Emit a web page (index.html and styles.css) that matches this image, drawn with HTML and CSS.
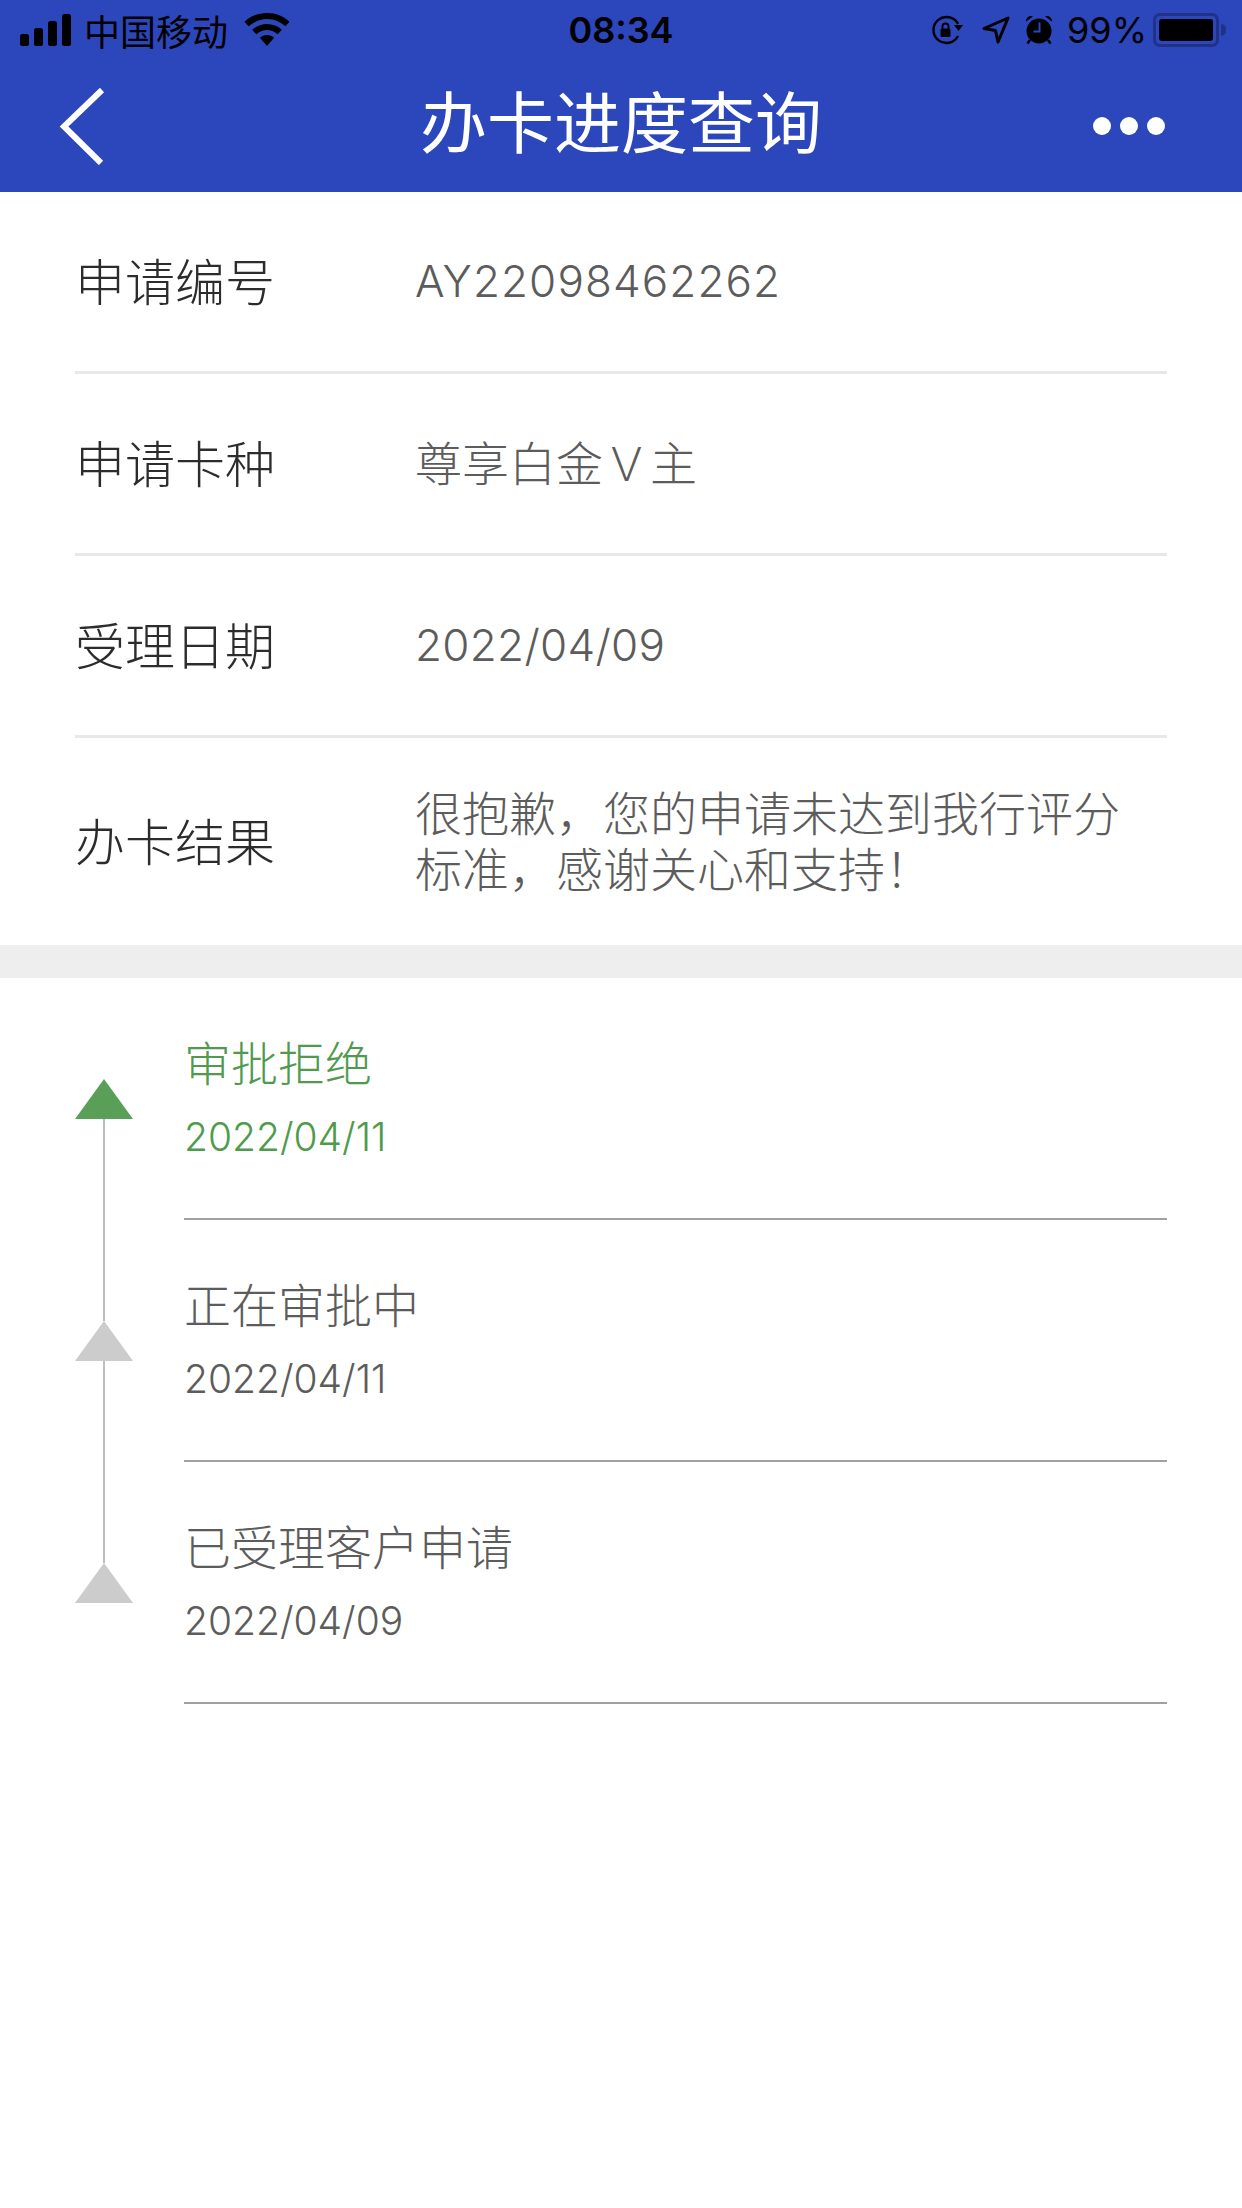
FILE: index.html
```html
<!DOCTYPE html>
<html lang="zh-CN">

<head>
    <meta charset="utf-8">
    <title>办卡进度查询</title>
    <link rel="stylesheet" href="styles.css">
</head>

<body>
    <div class="header">
        <div class="status-bar">
            <div class="status-left">
                <svg class="signal" width="51" height="32" viewBox="0 0 51 32">
                    <rect x="0" y="20" width="9" height="12" rx="2.5" />
                    <rect x="14" y="14" width="9" height="18" rx="2.5" />
                    <rect x="28" y="7" width="9" height="25" rx="2.5" />
                    <rect x="42" y="0" width="9" height="32" rx="2.5" />
                </svg>
                <span class="carrier">中国移动</span>
                <svg class="wifi" width="46" height="34" viewBox="0 0 46 34">
                    <path d="M23 0C14 0 6.500 3.300 0.500 8.700L4.600 13.200C9.600 8.800 16 6 23 6S36.400 8.800 41.400 13.200L45.500 8.700C39.500 3.300 32 0 23 0Z" />
                    <path d="M23 11C17.200 11 12 13.200 8.200 16.800L12.300 21.300C15.200 18.700 18.900 17 23 17S30.800 18.700 33.700 21.300L37.800 16.800C34 13.200 28.800 11 23 11Z" />
                    <path d="M23 22C20.200 22 17.800 23 15.900 24.800L23 33L30.100 24.800C28.200 23 25.800 22 23 22Z" />
                </svg>
            </div>
            <span class="clock">08:34</span>
            <div class="status-right">
                <svg class="lock-icon" width="32" height="30" viewBox="0 0 32 30" fill="none">
                    <path d="M27 9A13 13 0 1 0 27 21" stroke="#000" stroke-width="2.400" />
                    <path d="M23 10H32L27.500 16Z" fill="#000" />
                    <rect x="9.500" y="13.500" width="10" height="8.500" rx="1.500" fill="#000" />
                    <path d="M11.500 14V11.500A3 3 0 0 1 17.500 11.500V14" stroke="#000" stroke-width="1.800" />
                </svg>
                <svg class="location-icon" width="28" height="28" viewBox="0 0 28 28" fill="none">
                    <path d="M26 2L2 12.500L13.500 14.500L16 26Z" stroke="#000" stroke-width="3" stroke-linejoin="round" />
                </svg>
                <svg class="alarm-icon" width="28" height="30" viewBox="0 0 28 30">
                    <circle cx="14" cy="16" r="12.500" />
                    <path d="M1 6.500A5 5 0 0 1 8 1.500ZM27 6.500A5 5 0 0 0 20 1.500Z" />
                    <path d="M5 25L2.500 28.500M23 25L25.500 28.500" stroke="#000" stroke-width="2.500" />
                    <path d="M14.500 7.500V16.500H8.500" stroke="#2c46bb" stroke-width="2" fill="none" />
                </svg>
                <span class="percent">99%</span>
                <div class="battery">
                    <div class="battery-body"><div class="battery-level"></div></div>
                    <div class="battery-cap"></div>
                </div>
            </div>
        </div>
        <div class="nav-bar">
            <svg class="back" width="46" height="78" viewBox="0 0 46 78" fill="none">
                <path d="M43 3L5 39.500L42 76" stroke="#fff" stroke-width="6" />
            </svg>
            <div class="nav-title">办卡进度查询</div>
            <div class="more">
                <span class="dot"></span>
                <span class="dot"></span>
                <span class="dot"></span>
            </div>
        </div>
    </div>

    <div class="info">
        <div class="info-row">
            <div class="info-label">申请编号</div>
            <div class="info-value"><span class="num code">AY22098462262</span></div>
        </div>
        <div class="info-row">
            <div class="info-label">申请卡种</div>
            <div class="info-value">尊享白金Ｖ主</div>
        </div>
        <div class="info-row">
            <div class="info-label">受理日期</div>
            <div class="info-value"><span class="num">2022/04/09</span></div>
        </div>
        <div class="info-row result-row">
            <div class="info-label">办卡结果</div>
            <div class="info-value">很抱歉，您的申请未达到我行评分标准，感谢关心和支持！</div>
        </div>
    </div>

    <div class="gap"></div>

    <div class="timeline">
        <div class="step active">
            <div class="step-mark">
                <div class="triangle"></div>
                <div class="step-line"></div>
            </div>
            <div class="step-body">
                <div class="step-title">审批拒绝</div>
                <div class="step-date">2022/04/11</div>
            </div>
        </div>
        <div class="step">
            <div class="step-mark">
                <div class="triangle"></div>
                <div class="step-line"></div>
            </div>
            <div class="step-body">
                <div class="step-title">正在审批中</div>
                <div class="step-date">2022/04/11</div>
            </div>
        </div>
        <div class="step">
            <div class="step-mark">
                <div class="triangle"></div>
            </div>
            <div class="step-body">
                <div class="step-title">已受理客户申请</div>
                <div class="step-date">2022/04/09</div>
            </div>
        </div>
    </div>
</body>

</html>
```

FILE: styles.css
```css
html,
body {
    margin: 0;
    height: 100%;
}

body {
    font-family: "Noto Sans CJK SC", "Noto Sans", sans-serif;
    font-weight: 300;
    background-color: #ffffff;
    overflow: hidden;
}

.header {
    height: 192px;
    background-color: #2c46bb;
}

.status-bar {
    display: flex;
    justify-content: space-between;
    align-items: center;
    height: 60px;
    padding: 0 16px 0 20px;
    position: relative;
    color: #000000;
}

.status-left,
.status-right {
    display: flex;
    align-items: center;
}

.signal {
    margin-right: 13px;
}

.carrier {
    font-size: 36px;
    font-weight: 400;
    margin-right: 16px;
}

.clock {
    position: absolute;
    left: 0;
    right: 0;
    text-align: center;
    font-family: "Inter", "Liberation Sans", sans-serif;
    font-size: 36px;
    font-weight: 600;
}

.lock-icon {
    margin-right: 19px;
}

.location-icon {
    margin-right: 15px;
}

.alarm-icon {
    margin-right: 14px;
}

.percent {
    font-family: "Inter", "Liberation Sans", sans-serif;
    font-size: 36px;
    font-weight: 400;
    margin-right: 6px;
}

.battery {
    display: flex;
    align-items: center;
}

.battery-body {
    width: 66px;
    height: 34px;
    box-sizing: border-box;
    border: 3px solid #1f3287;
    border-radius: 7px;
    padding: 3px;
}

.battery-level {
    height: 100%;
    background-color: #000000;
    border-radius: 3px;
}

.battery-cap {
    width: 5px;
    height: 12px;
    margin-left: 2px;
    background-color: #1f3287;
    border-radius: 0 6px 6px 0;
}

.nav-bar {
    display: flex;
    align-items: center;
    justify-content: space-between;
    height: 132px;
    padding: 0 77px 0 59px;
    position: relative;
}

.nav-title {
    position: absolute;
    left: 0;
    right: 0;
    top: 0;
    text-align: center;
    font-size: 67px;
    font-weight: 400;
    line-height: 118px;
    color: #ffffff;
}

.more {
    display: flex;
    gap: 9px;
}

.dot {
    width: 18px;
    height: 18px;
    border-radius: 50%;
    background-color: #ffffff;
}

.info {
    padding: 0 75px;
}

.info-row {
    display: flex;
    align-items: center;
    box-sizing: border-box;
    height: 182px;
    padding-bottom: 5px;
    border-bottom: 3px solid #e8e8e8;
}

.result-row {
    height: 207px;
    border-bottom: none;
}

.info-label {
    width: 340px;
    flex-shrink: 0;
    font-size: 50px;
    color: #2c2c2c;
}

.info-value {
    font-size: 47px;
    line-height: 56px;
    padding-right: 12px;
    color: #5c5c5c;
}

.num {
    font-family: "Inter", "Liberation Sans", sans-serif;
    font-size: 44px;
    font-weight: 300;
    letter-spacing: 0.3px;
}

.code {
    letter-spacing: 1.100px;
}

.gap {
    height: 33px;
    background-color: #eeeeee;
}

.timeline {
    padding: 0 75px;
}

.step {
    display: flex;
    height: 242px;
}

.step-mark {
    width: 58px;
    margin-right: 51px;
    padding-top: 101px;
    position: relative;
    flex-shrink: 0;
}

.triangle {
    width: 0;
    height: 0;
    border-left: 29px solid transparent;
    border-right: 29px solid transparent;
    border-bottom: 40px solid #cccccc;
}

/* runs on under the step border, up to the next triangle */
.step-line {
    position: absolute;
    top: 141px;
    left: 28px;
    width: 2px;
    height: 202px;
    background-color: #bdbdbd;
}

.step-body {
    flex-grow: 1;
    box-sizing: border-box;
    border-bottom: 2px solid #a0a0a0;
    padding-top: 53px;
}

.step-title {
    font-size: 47px;
    line-height: 60px;
    color: #5c5c5c;
}

.step-date {
    font-family: "Inter", "Liberation Sans", sans-serif;
    font-size: 39px;
    font-weight: 300;
    line-height: 50px;
    margin-top: 21px;
    color: #5c5c5c;
}

.active .triangle {
    border-bottom-color: #5a9f58;
}

.active .step-title,
.active .step-date {
    color: #4f9a4d;
}
```
